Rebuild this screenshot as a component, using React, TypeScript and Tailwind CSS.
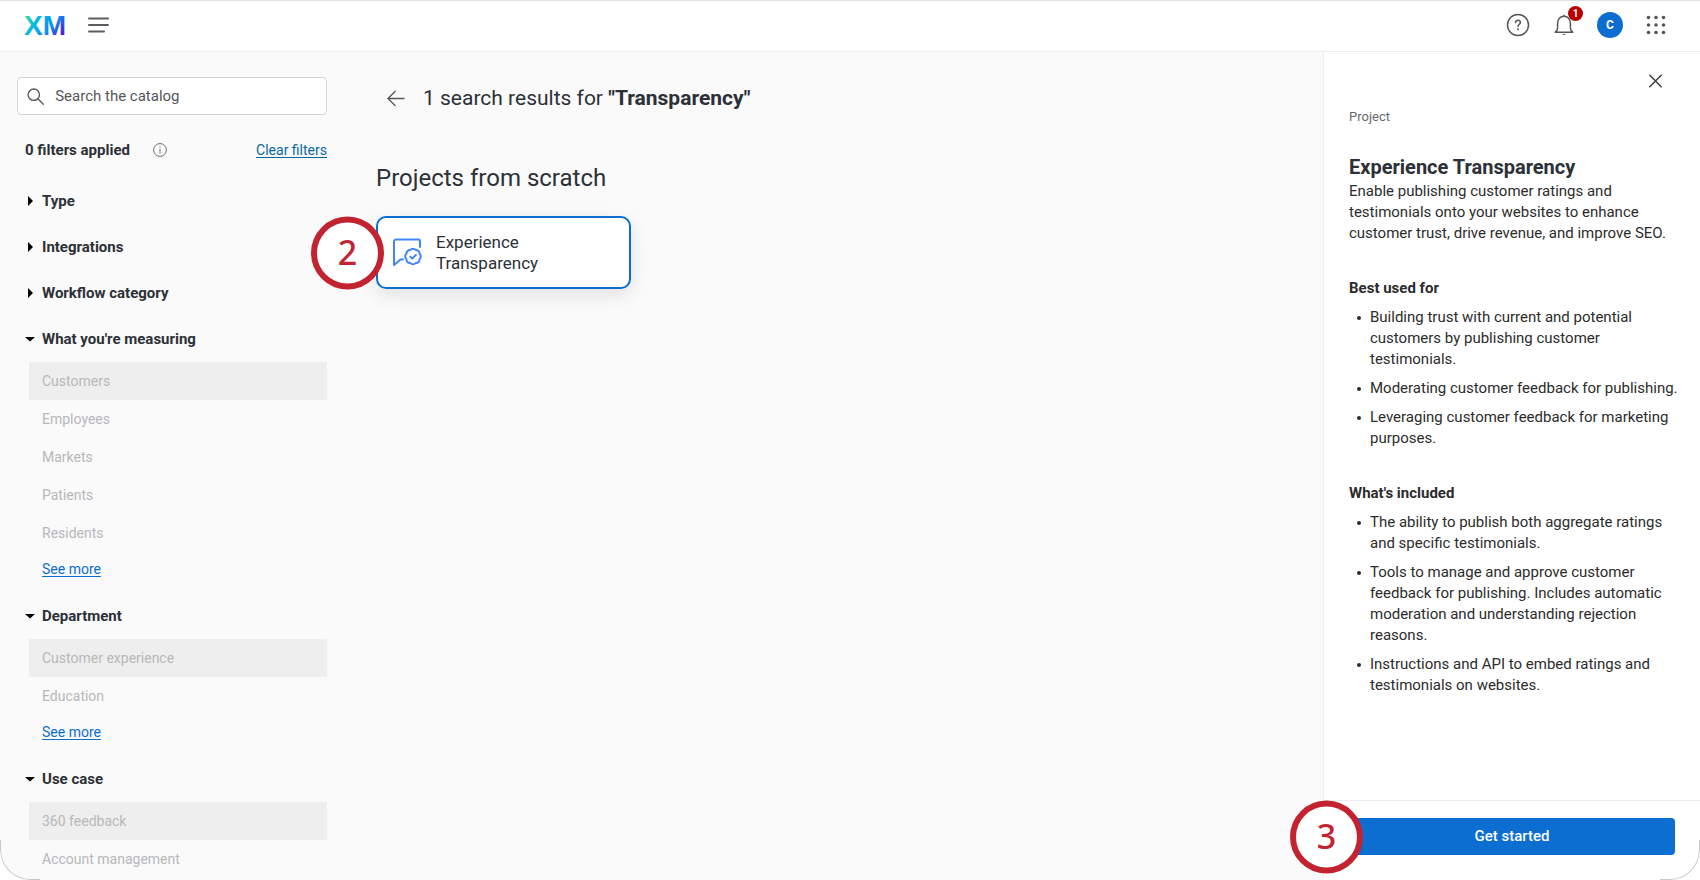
interface FilterGroup {
  title: string
  options?: string[]
  hasMore?: boolean
}

interface DetailListProps {
  title: string
  items: string[]
}

interface StepMarkerProps {
  step: number
  className: string
}

const filterGroups: FilterGroup[] = [
  { title: 'Type' },
  { title: 'Integrations' },
  { title: 'Workflow category' },
  {
    title: "What you're measuring",
    options: ['Customers', 'Employees', 'Markets', 'Patients', 'Residents'],
    hasMore: true,
  },
  {
    title: 'Department',
    options: ['Customer experience', 'Education'],
    hasMore: true,
  },
  { title: 'Use case', options: ['360 feedback', 'Account management'] },
]

const bestUsedFor = [
  'Building trust with current and potential customers by publishing customer testimonials.',
  'Moderating customer feedback for publishing.',
  'Leveraging customer feedback for marketing purposes.',
]

const included = [
  'The ability to publish both aggregate ratings and specific testimonials.',
  'Tools to manage and approve customer feedback for publishing. Includes automatic moderation and understanding rejection reasons.',
  'Instructions and API to embed ratings and testimonials on websites.',
]

function Logo() {
  return (
    <svg width="42" height="34" viewBox="0 0 42 34" role="img" aria-label="XM">
      <defs>
        <linearGradient id="xm" gradientUnits="userSpaceOnUse" x1="4" y1="6" x2="36" y2="30">
          <stop offset="0" stopColor="#21dbaa" />
          <stop offset="0.35" stopColor="#00b4ef" />
          <stop offset="0.65" stopColor="#0a8df0" />
          <stop offset="1" stopColor="#4a1fd6" />
        </linearGradient>
      </defs>
      <text
        x="0"
        y="27"
        fill="url(#xm)"
        className="font-['Liberation_Sans',sans-serif] text-[28px] font-bold"
      >
        XM
      </text>
    </svg>
  )
}

function Header() {
  return (
    <header className="flex h-[52px] shrink-0 items-center justify-between border-y border-t-[#e2e2e2] border-b-[#ececec] bg-white pb-0.5 pl-6 pr-[34px]">
      <div className="flex items-center gap-[22px]">
        <Logo />
        <button type="button" aria-label="Menu">
          <svg width="21" height="16" viewBox="0 0 21 16" stroke="#5a5d61" strokeWidth="2" strokeLinecap="round">
            <path d="M1 1.5h19M1 8h19M1 14.5h15" />
          </svg>
        </button>
      </div>
      <div className="flex items-center">
        <button type="button" aria-label="Help" className="mr-6">
          <svg width="24" height="24" viewBox="0 0 24 24" fill="none" stroke="#54575b" strokeWidth="1.5">
            <circle cx="12" cy="12" r="10.5" />
            <path d="M9.6 9.6c0-1.5 1-2.4 2.4-2.4s2.4.9 2.4 2.2c0 1.9-2.4 1.9-2.4 4.1" strokeLinecap="round" />
            <circle cx="12" cy="16.3" r="1" fill="#54575b" stroke="none" />
          </svg>
        </button>
        <button type="button" aria-label="Notifications" className="relative mr-[23px]">
          <svg width="20" height="22" viewBox="0 0 20 22" fill="none" stroke="#54575b" strokeWidth="1.5" strokeLinejoin="round">
            <path d="M1.3 18.2h17.4c-1.5-1.1-2.3-2.2-2.3-4.4V9.2c0-4-2.6-7-6.4-7s-6.4 3-6.4 7v4.6c0 2.2-.8 3.3-2.3 4.4z" />
            <path d="M10 .8v1.4" />
            <path d="M8.3 20a1.8 1.4 0 0 0 3.4 0z" fill="#54575b" stroke="none" />
          </svg>
          <span className="absolute -top-2 left-3.5 flex size-[15px] items-center justify-center rounded-full bg-[#b90000] text-[10px] font-bold text-white">
            1
          </span>
        </button>
        <button
          type="button"
          aria-label="Account"
          className="mr-[23px] flex size-[26px] items-center justify-center rounded-full bg-[#0b6ed0] text-xs font-bold text-white"
        >
          C
        </button>
        <button type="button" aria-label="Apps">
          <svg width="20" height="20" viewBox="0 0 20 20" fill="#54575b">
            {[2.5, 10, 17.5].map((y) =>
              [2.5, 10, 17.5].map((x) => <circle key={`${x}-${y}`} cx={x} cy={y} r="1.8" />),
            )}
          </svg>
        </button>
      </div>
    </header>
  )
}

function FilterSection({ title, options, hasMore }: FilterGroup) {
  return (
    <section>
      <button
        type="button"
        aria-expanded={!!options}
        className="flex h-[46px] w-full items-center text-[15px] font-bold text-[#2c3037]"
      >
        <svg width="10" height="10" viewBox="0 0 10 10" className="mr-[7px]">
          {options ? <path d="M0 3h10L5 7.5z" /> : <path d="M3 0v10l5-5z" />}
        </svg>
        {title}
      </button>
      {options?.map((option, i) => (
        <button
          key={option}
          type="button"
          disabled
          className={`ml-1 flex h-[38px] w-[calc(100%-4px)] items-center pl-[13px] text-sm text-[#b7b8ba] ${
            i === 0 ? 'bg-[#eeeeee]' : ''
          }`}
        >
          {option}
        </button>
      ))}
      {hasMore && (
        <div className="mb-[7px] flex h-[34px] items-center pl-[17px]">
          <a href="#more" className="text-sm text-[#0b6ed0] underline underline-offset-2">
            See more
          </a>
        </div>
      )}
    </section>
  )
}

function Sidebar() {
  return (
    <div className="w-[327px] shrink-0 pl-[17px] pt-[25px]">
      <label className="flex h-[38px] items-center rounded-[4px] border border-[#d3d4d6] bg-white pl-[9px]">
        <svg width="19" height="19" viewBox="0 0 19 19" fill="none" stroke="#54575b" strokeWidth="1.5">
          <circle cx="7.5" cy="7.5" r="6.3" />
          <path d="M12 12l6 6" strokeLinecap="round" />
        </svg>
        <input
          type="text"
          aria-label="Search the catalog"
          placeholder="Search the catalog"
          className="ml-[11px] w-full bg-transparent text-[15px] outline-none placeholder:text-[#54575b]"
        />
      </label>
      <div className="pl-2">
        <div className="mb-3 mt-[19px] flex h-8 items-center">
          <span className="text-[15px] font-bold text-[#2c3037]">0 filters applied</span>
          <svg width="14" height="14" viewBox="0 0 14 14" fill="none" stroke="#6b6e72" className="ml-[23px]">
            <circle cx="7" cy="7" r="6.4" />
            <path d="M7 6v4.5M7 3.5v1.2" />
          </svg>
          <a href="#clear" className="ml-auto text-sm text-[#0768a0] underline underline-offset-2">
            Clear filters
          </a>
        </div>
        {filterGroups.map((group) => (
          <FilterSection key={group.title} {...group} />
        ))}
      </div>
    </div>
  )
}

/** Numbered walkthrough marker, hangs over the left edge of its parent */
function StepMarker({ step, className }: StepMarkerProps) {
  return (
    <span
      className={`absolute right-full top-1/2 flex size-[73px] -translate-y-1/2 items-center justify-center rounded-full border-[6px] border-[#c32331] bg-white pb-0.5 font-['Noto_Sans',sans-serif] text-[34px] leading-none font-medium text-[#c32331] ${className}`}
    >
      {step}
    </span>
  )
}

function Results() {
  return (
    <main className="min-w-0 flex-1 pl-[49px] pt-7">
      <div className="flex items-center pl-[11px]">
        <button type="button" aria-label="Back">
          <svg width="18" height="17" viewBox="0 0 18 17" fill="none" stroke="#54575b" strokeWidth="1.3">
            <path d="M17.5 8.5H1M8.5 1L1 8.5 8.5 16" />
          </svg>
        </button>
        <h1 className="ml-[18px] text-[21px] leading-9 text-[#2c3037]">
          1 search results for <b>"Transparency"</b>
        </h1>
      </div>
      <h2 className="mt-11 text-2xl leading-9 text-[#2c3037]">Projects from scratch</h2>
      <div className="relative mt-5 w-[255px]">
        <button
          type="button"
          className="flex h-[73px] w-full items-center rounded-[10px] border-2 border-[#0b6ed0] bg-white pl-[15px] text-left shadow-[0_6px_18px_rgba(0,0,0,0.1)]"
        >
          <svg width="30" height="30" viewBox="0 0 30 30" fill="none" stroke="#4285f8" strokeWidth="2" strokeLinecap="round" strokeLinejoin="round">
            <path d="M27 9V3.5a2 2 0 0 0-2-2H3a2 2 0 0 0-2 2V27l6.5-5.5H10" />
            <path d="M26.5 15.8a3.4 3.4 0 0 1 0 5.4a3.4 3.4 0 0 1-3.8 3.8a3.4 3.4 0 0 1-5.4 0a3.4 3.4 0 0 1-3.8-3.8a3.4 3.4 0 0 1 0-5.4a3.4 3.4 0 0 1 3.8-3.8a3.4 3.4 0 0 1 5.4 0a3.4 3.4 0 0 1 3.8 3.8z" />
            <path d="M17.3 18.6l2 2 3.6-3.7" />
          </svg>
          <span className="ml-[13px] w-28 text-[17px] leading-[21px] text-[#2c3037]">
            Experience Transparency
          </span>
        </button>
        <StepMarker step={2} className="-mr-2" />
      </div>
    </main>
  )
}

function DetailList({ title, items }: DetailListProps) {
  return (
    <section className="mt-[34px]">
      <h3 className="font-bold">{title}</h3>
      <ul className="mt-2 space-y-2">
        {items.map((item) => (
          <li key={item} className="flex">
            <span className="ml-2 mr-[9px] mt-[9px] size-1 shrink-0 rounded-full bg-[#2c2c2c]" aria-hidden />
            {item}
          </li>
        ))}
      </ul>
    </section>
  )
}

function DetailPanel() {
  return (
    <aside className="flex w-[377px] shrink-0 flex-col border-l border-[#efefef] bg-white">
      <div className="flex-1 pl-[25px] pr-4 pt-5 text-[15px] leading-[21px] text-[#2c2c2c]">
        <button type="button" aria-label="Close" className="ml-auto mr-[22px] block">
          <svg width="13" height="18" viewBox="0 0 13 18" stroke="#3b3e42" strokeWidth="1.5" strokeLinecap="round">
            <path d="M.8 3.3l11.4 11.4M12.2 3.3L.8 14.7" />
          </svg>
        </button>
        <p className="mt-4 text-[13px] text-[#66696d]">Project</p>
        <h2 className="mt-[26px] text-xl font-bold leading-7 text-[#2c3037]">
          Experience Transparency
        </h2>
        <p>
          Enable publishing customer ratings and testimonials onto your websites to enhance customer
          trust, drive revenue, and improve SEO.
        </p>
        <DetailList title="Best used for" items={bestUsedFor} />
        <DetailList title="What's included" items={included} />
      </div>
      <div className="border-t border-[#ececec] px-[25px] pb-[25px] pt-[17px]">
        <div className="relative">
          <button
            type="button"
            className="h-[37px] w-full rounded-[4px] bg-[#0b6ed0] text-[15px] font-medium text-white"
          >
            Get started
          </button>
          <StepMarker step={3} className="-mr-3.5" />
        </div>
      </div>
    </aside>
  )
}

export default function App() {
  return (
    <div className="relative flex h-screen flex-col overflow-hidden rounded-b-[30px] bg-[#fafafa] font-['Roboto','Liberation_Sans',sans-serif]">
      <Header />
      <div className="flex min-h-0 flex-1">
        <Sidebar />
        <Results />
        <DetailPanel />
      </div>
      <span className="pointer-events-none absolute bottom-0 left-0 size-10 rounded-bl-[30px] border-b border-l border-[#c8c8c8]" />
      <span className="pointer-events-none absolute bottom-0 right-0 size-10 rounded-br-[30px] border-b border-r border-[#c8c8c8]" />
    </div>
  )
}
